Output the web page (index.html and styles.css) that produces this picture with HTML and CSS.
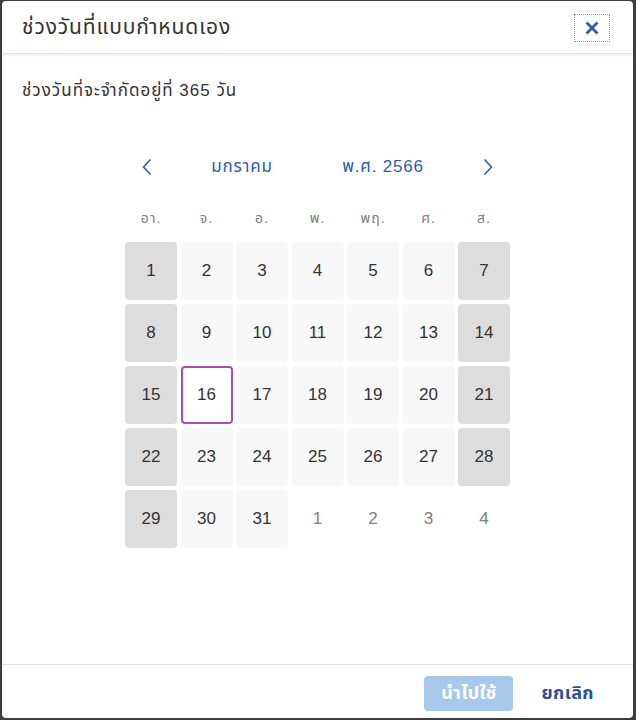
FILE: index.html
```html
<!DOCTYPE html>
<html lang="th">
<head>
<meta charset="utf-8">
<link rel="stylesheet" href="styles.css">
</head>
<body>
<div class="dialog">
  <div class="header">
    <div class="title">ช่วงวันที่แบบกำหนดเอง</div>
    <button class="close" aria-label="ปิด">
      <svg width="16" height="16" viewBox="0 0 16 16"><path d="M2.5 2.5 L13.5 13.5 M13.5 2.5 L2.5 13.5" stroke="#2d5ea9" stroke-width="2.8" stroke-linecap="butt" fill="none"/></svg>
    </button>
  </div>
  <div class="content">
    <div class="limit">ช่วงวันที่จะจำกัดอยู่ที่ 365 วัน</div>
    <div class="calendar">
      <div class="nav">
        <span class="arrow prev"><svg width="12" height="18" viewBox="0 0 12 18"><path d="M9.5 1.5 L2.5 9 L9.5 16.5" stroke="#2d5ea9" stroke-width="1.6" fill="none"/></svg></span>
        <span class="month">มกราคม</span>
        <span class="year">พ.ศ. 2566</span>
        <span class="spacer"></span>
        <span class="arrow next"><svg width="12" height="18" viewBox="0 0 12 18"><path d="M2.5 1.5 L9.5 9 L2.5 16.5" stroke="#2d5ea9" stroke-width="1.6" fill="none"/></svg></span>
      </div>
      <div class="weekdays">
        <span>อา.</span><span>จ.</span><span>อ.</span><span>พ.</span><span>พฤ.</span><span>ศ.</span><span>ส.</span>
      </div>
      <div class="days">
        <span class="day weekend">1</span><span class="day">2</span><span class="day">3</span><span class="day">4</span><span class="day">5</span><span class="day">6</span><span class="day weekend">7</span>
        <span class="day weekend">8</span><span class="day">9</span><span class="day">10</span><span class="day">11</span><span class="day">12</span><span class="day">13</span><span class="day weekend">14</span>
        <span class="day weekend">15</span><span class="day selected">16</span><span class="day">17</span><span class="day">18</span><span class="day">19</span><span class="day">20</span><span class="day weekend">21</span>
        <span class="day weekend">22</span><span class="day">23</span><span class="day">24</span><span class="day">25</span><span class="day">26</span><span class="day">27</span><span class="day weekend">28</span>
        <span class="day weekend">29</span><span class="day">30</span><span class="day">31</span><span class="day other">1</span><span class="day other">2</span><span class="day other">3</span><span class="day other">4</span>
      </div>
    </div>
  </div>
  <div class="footer">
    <button class="apply">นำไปใช้</button>
    <button class="cancel">ยกเลิก</button>
  </div>
</div>
</body>
</html>
```
FILE: styles.css
```css
html, body {
  margin: 0;
  padding: 0;
  height: 100%;
}
body {
  background: #3d3d3d;
  font-family: "Liberation Sans", "Noto Sans Thai", "Noto Sans", sans-serif;
  color: #333;
  overflow: hidden;
}
.dialog {
  margin: 1px 3px 0 2px;
  height: 717px;
  background: #fff;
  border-radius: 4px;
  display: flex;
  flex-direction: column;
  overflow: hidden;
}
.header {
  height: 52px;
  flex: none;
  display: flex;
  align-items: center;
  justify-content: space-between;
  padding: 0 23px 0 20px;
  border-bottom: 1px solid #e2e2e2;
  box-shadow: 0 1px 3px rgba(0,0,0,0.08);
  position: relative;
  z-index: 1;
}
.title {
  font-size: 21px;
  letter-spacing: 0.9px;
  color: #333;
}
.close {
  width: 36px;
  height: 28px;
  border: 1px dotted #9a9a9a;
  background: #fff;
  padding: 0;
  display: flex;
  align-items: center;
  justify-content: center;
  margin-top: 2px;
}
.content {
  flex: 1;
  padding: 27px 20px 0;
}
.limit {
  font-size: 17px;
  letter-spacing: 1px;
  line-height: 20px;
  color: #333;
}
.calendar {
  width: 385px;
  margin: 51px auto 0;
}
.nav {
  height: 30px;
  display: flex;
  align-items: center;
  color: #2d5ea9;
  font-size: 17px;
  letter-spacing: 0.8px;
}
.arrow {
  width: 44px;
  display: flex;
  justify-content: center;
}
.month {
  width: 146px;
  text-align: center;
}
.year {
  width: 136px;
  text-align: center;
}
.spacer {
  flex: 1;
}
.weekdays {
  margin-top: 24px;
  height: 24px;
  display: grid;
  grid-template-columns: repeat(7, 52px);
  column-gap: 3.5px;
  align-items: center;
  font-size: 14px;
  letter-spacing: 1px;
  color: #808080;
  text-align: center;
}
.days {
  margin-top: 12px;
  display: grid;
  grid-template-columns: repeat(7, 52px);
  grid-auto-rows: 58px;
  column-gap: 3.5px;
  row-gap: 4px;
}
.day {
  display: flex;
  align-items: center;
  justify-content: center;
  border-radius: 4px;
  background: #f8f8f8;
  font-size: 17px;
  color: #333;
  box-sizing: border-box;
}
.day.weekend {
  background: #dddddd;
}
.day.other {
  background: transparent;
  color: #808080;
}
.day.selected {
  background: #fff;
  border: 2px solid #b04caf;
}
.footer {
  height: 54px;
  box-sizing: border-box;
  flex: none;
  border-top: 1px solid #e2e2e2;
  display: flex;
  align-items: center;
  justify-content: flex-end;
  padding: 3px 25px 0 0;
  gap: 14px;
}
.footer button {
  font-family: inherit;
  font-size: 18px;
  font-weight: bold;
  letter-spacing: 0.4px;
  border: none;
  border-radius: 4px;
  height: 35px;
  padding: 0 14px;
}
.apply {
  background: #a9c9ec;
  color: #fff;
  width: 89px;
  padding: 0;
  letter-spacing: 2px;
}
.cancel {
  background: transparent;
  color: #2b4f9b;
}
```
